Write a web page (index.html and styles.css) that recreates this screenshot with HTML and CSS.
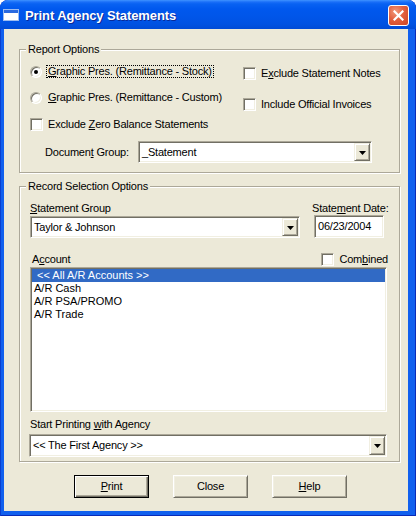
FILE: index.html
```html
<!DOCTYPE html>
<html>
<head>
<meta charset="utf-8">
<title>Print Agency Statements</title>
<link rel="stylesheet" href="styles.css">
</head>
<body>
<div class="window">
  <div class="titlebar">
    <svg class="app-icon" width="16" height="12" viewBox="0 0 16 12">
      <rect x="0.5" y="0.5" width="15" height="11" fill="#ffffff" stroke="#9cbcf0"/>
      <rect x="1" y="1" width="14" height="3" fill="#2b6ae0"/>
    </svg>
    <span class="title">Print Agency Statements</span>
    <span class="close-btn">
      <svg width="11" height="11" viewBox="0 0 11 11"><path d="M1.5 1.5 L9.5 9.5 M9.5 1.5 L1.5 9.5" stroke="#fff" stroke-width="2.2" stroke-linecap="square"/></svg>
    </span>
  </div>
  <div class="client">
    <fieldset class="group group-report">
      <legend>Report Options</legend>
      <div class="opts">
        <div class="col-left">
          <div class="opt"><span class="radio checked"></span><span class="opt-text focus"><u>G</u>raphic Pres. (Remittance - Stock)</span></div>
          <div class="opt"><span class="radio"></span><span class="opt-text"><u>G</u>raphic Pres. (Remittance - Custom)</span></div>
          <div class="opt opt-zero"><span class="check"></span><span class="opt-label">Exclude <u>Z</u>ero Balance Statements</span></div>
        </div>
        <div class="col-right">
          <div class="opt"><span class="check"></span><span class="opt-label">E<u>x</u>clude Statement Notes</span></div>
          <div class="opt"><span class="check"></span><span class="opt-label">Include Official Invoices</span></div>
        </div>
      </div>
      <div class="docgroup">
        <span class="doc-label">Documen<u>t</u> Group:</span>
        <div class="combo doc-combo"><span class="combo-text">_Statement</span><span class="drop"><svg width="7" height="4" viewBox="0 0 7 4"><path d="M0 0 H7 L3.5 4 Z" fill="#000"/></svg></span></div>
      </div>
    </fieldset>

    <fieldset class="group group-record">
      <legend>Record Selection Options</legend>
      <div class="row-a">
        <div class="sg">
          <div class="field-label"><u>S</u>tatement Group</div>
          <div class="combo sg-combo"><span class="combo-text">Taylor &amp; Johnson</span><span class="drop"><svg width="7" height="4" viewBox="0 0 7 4"><path d="M0 0 H7 L3.5 4 Z" fill="#000"/></svg></span></div>
        </div>
        <div class="sd">
          <div class="field-label">State<u>m</u>ent Date:</div>
          <div class="edit date-edit">06/23/2004</div>
        </div>
      </div>
      <div class="row-b">
        <span class="acct-label">A<u>c</u>count</span>
        <div class="opt"><span class="check"></span><span class="opt-label">Com<u>b</u>ined</span></div>
      </div>
      <div class="listbox">
        <div class="item selected">&nbsp;&lt;&lt; All A/R Accounts &gt;&gt;</div>
        <div class="item">A/R Cash</div>
        <div class="item">A/R PSA/PROMO</div>
        <div class="item">A/R Trade</div>
      </div>
      <div class="field-label start-label">Start Printing <u>w</u>ith Agency</div>
      <div class="combo agency-combo"><span class="combo-text">&lt;&lt; The First Agency &gt;&gt;</span><span class="drop"><svg width="7" height="4" viewBox="0 0 7 4"><path d="M0 0 H7 L3.5 4 Z" fill="#000"/></svg></span></div>
    </fieldset>

    <div class="buttons">
      <span class="btn default"><u>P</u>rint</span>
      <span class="btn">Close</span>
      <span class="btn"><u>H</u>elp</span>
    </div>
  </div>
</div>
</body>
</html>
```

FILE: styles.css
```css
* { box-sizing: border-box; }
html, body { margin: 0; padding: 0; background: #ffffff; }
body {
  font-family: "Liberation Sans", Arial, sans-serif;
  font-size: 11px;
  line-height: 13px;
  letter-spacing: -0.2px;
  color: #000;
}
u { text-underline-offset: 1px; }

.window {
  width: 416px;
  height: 516px;
  display: flex;
  flex-direction: column;
  background: #1160ee;
  border-radius: 8px 8px 0 0;
  overflow: hidden;
  box-shadow: inset 1px 0 #0a3fd0, inset -1px 0 #0a2bb8, inset 0 -1px #0a2bb8;
}

.titlebar {
  height: 29px;
  flex: none;
  display: flex;
  align-items: center;
  padding: 0 7px 0 3px;
  background: linear-gradient(180deg, #3f93ff 0px, #1a6ff8 2px, #0862f2 4px, #0058ee 9px, #0055e8 18px, #0052e2 24px, #004bd6 29px);
  border-radius: 8px 8px 0 0;
  letter-spacing: 0;
}
.app-icon { flex: none; }
.title {
  margin-left: 6px;
  padding-top: 2px;
  flex: 1;
  color: #fff;
  font-weight: bold;
  font-size: 13px;
  letter-spacing: -0.1px;
  text-shadow: 1px 1px 0 #0a2a98;
}
.close-btn {
  flex: none;
  width: 21px;
  height: 21px;
  display: flex;
  align-items: center;
  justify-content: center;
  border: 1px solid #fff;
  border-radius: 3px;
  background: radial-gradient(circle at 35% 30%, #f29a7c 0%, #e2603f 45%, #cc4424 100%);
  margin-top: 1px;
}

.client {
  flex: 1;
  margin: 0 8px 5px 4px;
  background: #ece9d8;
  padding: 13px 0 0 15px;
}

.group {
  margin: 0;
  width: 381px;
  border: 1px solid #aca899;
  box-shadow: inset 1px 1px 0 #fff, 1px 1px 0 #fff;
  border-radius: 0;
  padding: 0 11px 0 10px;
  min-width: 0;
}
.group legend {
  margin-left: -4px;
  padding: 0 2px;
  line-height: 14px;
  background: #ece9d8;
}

/* Report options */
.group-report { padding-top: 9px; padding-bottom: 9px; }
.opts {
  display: grid;
  grid-template-columns: 213px 1fr;
}
.col-left { display: flex; flex-direction: column; gap: 13px; }
.col-left .opt-zero { margin-top: 1px; }
.col-right { display: flex; flex-direction: column; gap: 18px; padding-top: 2px; }

.opt {
  display: flex;
  align-items: center;
  height: 13px;
  white-space: nowrap;
}
.opt-text { margin-left: 5px; padding: 0 1px; line-height: 11px; }
.opt-label { margin-left: 5px; }
.focus { outline: 1px dotted #000; outline-offset: 0; }

.radio {
  flex: none;
  width: 12px;
  height: 12px;
  border-radius: 50%;
  background: #fff;
  border: 1px solid;
  border-color: #aca899 #fff #fff #aca899;
  box-shadow: inset 1px 1px 0 #716f64, inset -1px -1px 0 #f1efe2;
  display: flex;
  align-items: center;
  justify-content: center;
}
.radio.checked::after {
  content: "";
  width: 4px;
  height: 4px;
  border-radius: 50%;
  background: #000;
}
.check {
  flex: none;
  width: 13px;
  height: 13px;
  background: #fff;
  border: 1px solid;
  border-color: #aca899 #fff #fff #aca899;
  box-shadow: inset 1px 1px 0 #716f64, inset -1px -1px 0 #f1efe2;
}

.docgroup {
  display: flex;
  align-items: center;
  margin-top: 10px;
  padding-left: 15px;
}
.doc-label { width: 93px; flex: none; }

.combo {
  display: flex;
  align-items: stretch;
  height: 22px;
  background: #fff;
  border: 1px solid;
  border-color: #aca899 #fff #fff #aca899;
  box-shadow: inset 1px 1px 0 #716f64, inset -1px -1px 0 #f1efe2;
  padding: 1px;
}
.combo-text {
  flex: 1;
  display: flex;
  align-items: center;
  padding-left: 2px;
  white-space: nowrap;
}
.drop {
  flex: none;
  width: 16px;
  display: flex;
  align-items: center;
  justify-content: center;
  background: #ece9d8;
  border: 1px solid;
  border-color: #f1efe2 #716f64 #716f64 #f1efe2;
  box-shadow: inset 1px 1px 0 #fff, inset -1px -1px 0 #aca899;
}
.drop svg { margin-top: 1px; }
.doc-combo { width: 234px; }

/* Record selection */
.group-record { margin-top: 6px; padding-top: 9px; padding-bottom: 4px; }
.row-a { display: flex; align-items: flex-start; }
.sg { width: 270px; flex: none; }
.sg-combo { margin-top: 1px; width: 270px; }
.sd { margin-left: 12px; }
.sd .field-label { white-space: nowrap; }
.edit {
  height: 23px;
  background: #fff;
  border: 1px solid;
  border-color: #aca899 #fff #fff #aca899;
  box-shadow: inset 1px 1px 0 #716f64, inset -1px -1px 0 #f1efe2;
  display: flex;
  align-items: center;
  padding-left: 3px;
}
.date-edit { width: 70px; margin-top: 0; margin-left: 2px; }

.row-b {
  display: flex;
  justify-content: space-between;
  align-items: center;
  margin-top: 15px;
  height: 13px;
}
.acct-label { padding-left: 2px; }

.listbox {
  margin-top: 1px;
  height: 145px;
  width: 357px;
  background: #fff;
  border: 1px solid;
  border-color: #aca899 #fff #fff #aca899;
  box-shadow: inset 1px 1px 0 #716f64, inset -1px -1px 0 #f1efe2;
  padding: 1px;
  letter-spacing: 0;
}
.item {
  height: 13px;
  line-height: 13px;
  padding-left: 2px;
  white-space: nowrap;
}
.item.selected { background: #316ac5; color: #fff; }

.start-label { margin-top: 6px; }
.agency-combo { margin-top: 3px; margin-left: -1px; width: 358px; height: 23px; }

.buttons {
  display: flex;
  gap: 24px;
  margin-top: 13px;
  padding-left: 55px;
}
.btn {
  width: 75px;
  height: 23px;
  display: flex;
  align-items: center;
  justify-content: center;
  background: #ece9d8;
  border: 1px solid;
  border-color: #fff #716f64 #716f64 #fff;
  box-shadow: inset 1px 1px 0 #f1efe2, inset -1px -1px 0 #aca899;
}
.btn.default {
  border: 1px solid #000;
  box-shadow: inset 1px 1px 0 #fff, inset -1px -1px 0 #716f64, inset -2px -2px 0 #aca899;
}
```
